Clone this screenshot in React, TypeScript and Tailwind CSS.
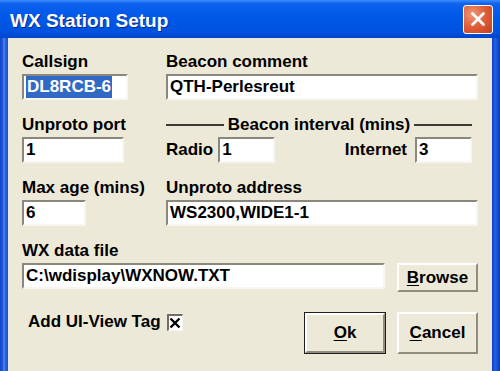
import type { ReactNode } from 'react';

function Field({ children, className = '' }: { children?: ReactNode; className?: string }) {
  return (
    <div
      className={`h-[26px] bg-white border-t-2 border-l-2 border-t-[#8a877c] border-l-[#8a877c] border-b-2 border-r-2 border-b-[#f7f6f0] border-r-[#f7f6f0] pl-[2px] flex items-center leading-[22px] whitespace-nowrap overflow-hidden ${className}`}
    >
      {children}
    </div>
  );
}

function Label({ children }: { children: ReactNode }) {
  return <div className="h-[20px] leading-[20px] whitespace-nowrap">{children}</div>;
}

function Button({ children, isDefault = false, className = '' }: { children: ReactNode; isDefault?: boolean; className?: string }) {
  return (
    <div className={`${isDefault ? 'border border-[#1f1f1f]' : ''} ${className}`}>
      <div className="h-full w-full bg-[#ece9d8] border-t-2 border-l-2 border-t-white border-l-white border-b-2 border-r-2 border-b-[#8f8c80] border-r-[#8f8c80] flex items-center justify-center">
        {children}
      </div>
    </div>
  );
}

export default function App() {
  return (
    <div className="w-[500px] h-[371px] overflow-hidden bg-[#0050e0] font-['Liberation_Sans',Arial,sans-serif] font-bold text-[17px] text-black">
      {/* Title bar */}
      <div className="h-[38px] flex items-center justify-between pl-[10px] pr-[7px] bg-[linear-gradient(to_bottom,#3b8cfd_0%,#0d61ee_10%,#0058e8_45%,#0052df_85%,#0045c8_100%)]">
        <span className="text-white text-[19px] leading-none pt-[2px] [text-shadow:1px_1px_0_#0b2a8a]">
          WX Station Setup
        </span>
        <div className="w-[30px] h-[29px] rounded-[3px] border border-white bg-[radial-gradient(circle_at_30%_30%,#f0987a_0%,#e0603a_45%,#c2401b_100%)] flex items-center justify-center">
          <svg width="16" height="16" viewBox="0 0 16 16">
            <path d="M2.5 2.5 L13.5 13.5 M13.5 2.5 L2.5 13.5" stroke="white" strokeWidth="2.8" strokeLinecap="round" />
          </svg>
        </div>
      </div>

      <div className="flex h-[333px]">
        <div className="w-[8px] bg-[linear-gradient(to_right,#1446c8_0%,#1d55d6_30%,#4a8af2_50%,#2660e0_70%,#1a50d2_100%)]" />

        {/* Body */}
        <div className="flex-1 bg-[#ece9d8] px-[14px] pt-[14px]">
          <div className="grid grid-cols-[144px_1fr] gap-y-[15px]">
            {/* Row 1 */}
            <div className="flex flex-col gap-[2px]">
              <Label>Callsign</Label>
              <Field className="w-[106px]">
                <span className="bg-[#316ac5] text-white px-[1px]">DL8RCB-6</span>
              </Field>
            </div>
            <div className="flex flex-col gap-[2px]">
              <Label>Beacon comment</Label>
              <Field>QTH-Perlesreut</Field>
            </div>

            {/* Row 2 */}
            <div className="flex flex-col gap-[2px]">
              <Label>Unproto port</Label>
              <Field className="w-[102px]">1</Field>
            </div>
            <div className="flex flex-col gap-[2px]">
              <div className="h-[20px] flex items-center pr-[6px]">
                <div className="flex-1 h-[2px] bg-[#3b3a36]" />
                <span className="px-[4px] leading-[20px]">Beacon interval (mins)</span>
                <div className="flex-1 h-[2px] bg-[#3b3a36]" />
              </div>
              <div className="flex items-center justify-between pr-[6px]">
                <div className="flex items-center gap-[5px]">
                  <span>Radio</span>
                  <Field className="w-[57px]">1</Field>
                </div>
                <div className="flex items-center gap-[8px]">
                  <span>Internet</span>
                  <Field className="w-[57px]">3</Field>
                </div>
              </div>
            </div>

            {/* Row 3 */}
            <div className="flex flex-col gap-[2px]">
              <Label>Max age (mins)</Label>
              <Field className="w-[64px]">6</Field>
            </div>
            <div className="flex flex-col gap-[2px]">
              <Label>Unproto address</Label>
              <Field>WS2300,WIDE1-1</Field>
            </div>

            {/* Row 4 */}
            <div className="col-span-2 flex flex-col gap-[2px]">
              <Label>WX data file</Label>
              <div className="flex items-start gap-[12px]">
                <Field className="w-[363px]">C:\wdisplay\WXNOW.TXT</Field>
                <Button className="w-[81px] h-[29px]">
                  <span>
                    <span className="underline underline-offset-[2px]">B</span>rowse
                  </span>
                </Button>
              </div>
            </div>
          </div>

          {/* Row 5 */}
          <div className="mt-[20px] flex items-start justify-between">
            <div className="flex items-center gap-[6px] pl-[6px] h-[20px]">
              <span className="leading-[20px]">Add UI-View Tag</span>
              <div className="w-[16px] h-[17px] bg-white border-t-2 border-l-2 border-t-[#6f6d64] border-l-[#6f6d64] border-b border-r border-b-[#f7f6f0] border-r-[#f7f6f0] flex items-center justify-center">
                <svg width="12" height="12" viewBox="0 0 12 12">
                  <path d="M1.5 1.5 L10.5 10.5 M10.5 1.5 L1.5 10.5" stroke="black" strokeWidth="2.4" />
                </svg>
              </div>
            </div>
            <div className="flex gap-[11px]">
              <Button isDefault className="w-[82px] h-[42px]">
                <span>
                  <span className="underline underline-offset-[2px]">O</span>k
                </span>
              </Button>
              <Button className="w-[81px] h-[42px]">
                <span>
                  <span className="underline underline-offset-[2px]">C</span>ancel
                </span>
              </Button>
            </div>
          </div>
        </div>

        <div className="w-[8px] bg-[linear-gradient(to_right,#0b3db8_0%,#1f60e8_35%,#1a58e0_55%,#0a38b0_100%)]" />
      </div>
    </div>
  );
}
